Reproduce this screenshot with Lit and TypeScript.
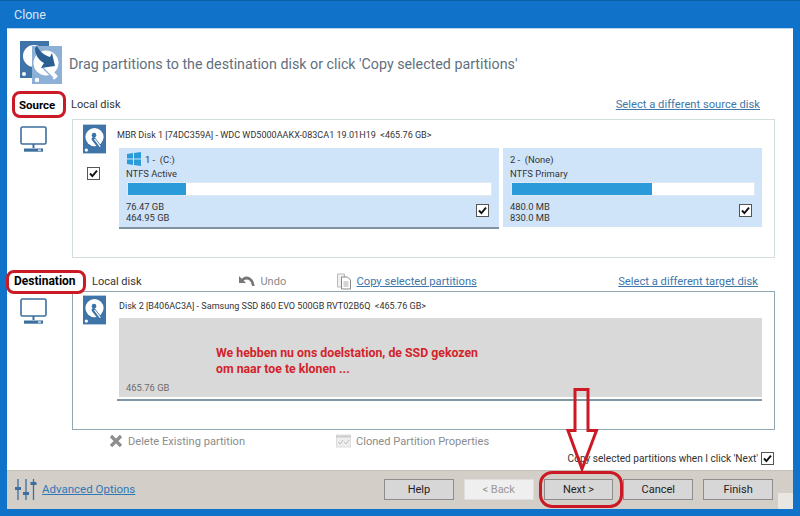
import { LitElement, html, css } from "lit";
import { customElement } from "lit/decorators.js";

const diskIcon = html`<svg class="disk" viewBox="0 0 24 30"><rect width="24" height="30" fill="#3f74a8"/><circle cx="12" cy="13" r="9.500" fill="#fff"/><circle cx="11.500" cy="11" r="2.400" fill="#3f74a8"/><path d="M11 15l7 9" stroke="#3f74a8" stroke-width="4.200" stroke-linecap="round"/><path d="M12 15l6 8" stroke="#fff" stroke-width="1.300"/><circle cx="3.500" cy="26.500" r="1.700" fill="#fff"/></svg>`;
const monitor = html`<svg class="mon" viewBox="0 0 27 27" fill="none" stroke="#3d6f9e"><rect x="1" y="1" width="25" height="17" rx="1.500" stroke-width="1.600"/><path d="M13.500 18v4" stroke-width="2"/><rect x="4" y="22.500" width="19" height="3.200" fill="#3d6f9e" stroke="none"/><rect x="18" y="23.500" width="3" height="1.200" fill="#fff" stroke="none"/></svg>`;
const check = html`<svg class="chk" viewBox="0 0 13 13"><rect x=".5" y=".5" width="12" height="12" fill="#fff" stroke="#555"/><path d="M3 6.500l2.400 2.600L10 3.600" fill="none" stroke="#111" stroke-width="1.900"/></svg>`;

@customElement("app-root")
export class AppRoot extends LitElement {
  static styles = css`
    :host { display: block; width: 800px; height: 516px; position: relative; overflow: hidden;
      font-family: Roboto, "Noto Sans", sans-serif; color: #333; background: #1172c9; }
    .frame { display: flex; flex-direction: column; height: 516px; padding: 0 7px; box-sizing: border-box; border-top: 1px solid #0d5fa8; }
    .title { height: 27px; flex: none; display: flex; align-items: center; padding-left: 7px; color: #d8e8f6; font-size: 12.500px; }
    .main { flex: 1; background: #fff; display: flex; flex-direction: column; min-height: 0; box-sizing: border-box; border-top: 1px solid #bcd6ee; }
    .hdr { height: 61px; flex: none; display: flex; align-items: center; padding-left: 13px; gap: 6px; color: #62707e; font-size: 14.250px; box-sizing: border-box; padding-top: 8px; }
    .logo { width: 43px; height: 43px; flex: none; margin-top: -2px; }
    .sec-head { display: flex; align-items: center; font-size: 11px; color: #333; flex: none; }
    .src-head { height: 29px; }
    .lab { font-weight: 700; color: #000; font-size: 11.500px; }
    .src-lab { margin-left: 12px; width: 52px; }
    .dst-lab { margin-left: 7px; width: 78px; font-size: 12px; }
    .link { color: #3f76a8; text-decoration: underline; font-size: 11.200px; }
    .right { margin-left: auto; }
    .body { display: flex; flex: none; }
    .rail { width: 65px; flex: none; padding-left: 13px; box-sizing: border-box; }
    .mon { width: 27px; height: 27px; display: block; margin-top: 7px; }
    .panel { width: 703px; box-sizing: border-box; border: 1px solid #d3dde0; flex: none; position: relative; }
    .src-panel { height: 139px; padding: 4px 12px 0 10px; }
    .dst-panel { height: 139px; border-color: #90a8b4; padding: 3px 12px 0 10px; }
    .disk-row { display: flex; height: 24px; gap: 11px; font-size: 9.050px; color: #333; }
    .disk { width: 23px; height: 30px; flex: none; display: block; }
    .dtext { line-height: 22px; white-space: pre; }
    .parts-row { display: flex; }
    .selbox { width: 36px; flex: none; padding: 19px 0 0 4px; box-sizing: border-box; }
    .chk { width: 13px; height: 13px; display: block; flex: none; }
    .parts { display: flex; gap: 4px; }
    .part { background: #cfe4f9; box-sizing: border-box; font-size: 9.400px; color: #333; padding: 4px 7px 0 7px; }
    .p1 { width: 380px; height: 81px; border-bottom: 2px solid #7f929f; }
    .p2 { width: 259px; height: 79px; }
    .ptitle { display: flex; align-items: center; gap: 4px; height: 14px; padding-left: 1px; white-space: pre; }
    .p2 .ptitle { padding-left: 0; }
    .win { width: 14px; height: 14px; flex: none; }
    .ptype { height: 15px; line-height: 16px; }
    .bar { height: 14px; background: #fff; margin: 1px 0 0 1px; border: 1px solid #dfe9f2; box-sizing: border-box; }
    .fill { height: 100%; background: #2a9ad8; }
    .pfoot { display: flex; justify-content: space-between; align-items: flex-start; padding-top: 5px; }
    .vals { line-height: 11px; }
    .pfoot .chk { margin: 3px 3px 0 0; }
    .free { margin-left: 36px; width: 643px; height: 79px; background: #d9d9d9; font-size: 9.400px; color: #6a6a6a; display: flex; align-items: flex-end; padding: 0 0 4px 7px; box-sizing: border-box; margin-top: -1px; }
    .free-line { margin: 2px 0 0 34px; width: 645px; border-top: 2px solid #7f96a4; }
    .undo { display: flex; align-items: center; gap: 4px; color: #8a8a8a; margin-left: 97px; width: 98px; font-size: 11px; }
    .copy { display: flex; align-items: center; gap: 3px; }
    .dst-head { height: 23px; margin-top: 10px; box-sizing: border-box; padding-top: 3px; }
    .actions { display: flex; align-items: center; height: 20px; margin-top: 1px; color: #8c8c8c; font-size: 11.100px; padding-left: 102px; flex: none; }
    .act { display: flex; align-items: center; gap: 5px; }
    .a1 { width: 227px; }
    .copyline { flex: none; height: 17px; display: flex; justify-content: flex-end; align-items: center; gap: 3px; font-size: 10.100px; padding-right: 19px; color: #333; margin-top: -1px; }
    .footer { flex: none; height: 39px; margin-top: auto; background: #d3cfc8; display: flex; align-items: center; padding: 0 20px 2px 7px; border-top: 1px solid #c4c0b8; box-sizing: border-box; position: relative; }
    .adv { display: flex; align-items: center; gap: 5px; }
    .adv .link { color: #2f78b8; font-size: 11.500px; }
    .btns { margin-left: auto; display: flex; gap: 10px; }
    .btn { width: 69.800px; height: 21px; box-sizing: border-box; background: #d7d7d7; border: 1px solid #8d8d8d; display: flex; align-items: center; justify-content: center; font-size: 11px; color: #222; }
    .btn.off { background: #efefef; border-color: #dedede; color: #999; }
    .grip { position: absolute; right: 0; bottom: 0; width: 15px; height: 16px; background: #e9e7e3; }
    .bottom { height: 7px; flex: none; }
    .note { position: absolute; left: 216px; top: 345px; color: #d3232b; font-weight: 700; font-size: 12.300px; line-height: 16px; white-space: nowrap; }
    .ring { position: absolute; border: 3px solid #cb1a26; border-radius: 8px; box-sizing: border-box; }
    .r1 { left: 12px; top: 91px; width: 54px; height: 27px; }
    .r2 { left: 6px; top: 270px; width: 80px; height: 24px; }
    .r3 { left: 539px; top: 471px; width: 84px; height: 37px; border-radius: 13px; }
    .arrow { position: absolute; left: 565px; top: 387px; width: 34px; height: 86px; }
  `;

  private bar(pct: number) {
    return html`<div class="bar"><div class="fill" style="width:${pct}%"></div></div>`;
  }

  render() {
    return html`
      <div class="frame">
        <div class="title">Clone</div>
        <div class="main">
          <div class="hdr">
            <svg class="logo" viewBox="0 0 43 43">
              <path d="M0 0h29v37H0z" fill="#3f74a8"/>
              <circle cx="14" cy="15" r="11" fill="#fff"/>
              <circle cx="4" cy="33" r="2" fill="#fff"/>
              <path d="M12 5h30v38H12z" fill="#8db0d6"/>
              <circle cx="26" cy="22" r="12.500" fill="#fff"/>
              <circle cx="17" cy="39" r="2.200" fill="#fff"/>
              <path d="M27 27l9 10" stroke="#fff" stroke-width="5"/>
              <path d="M22 26l11 11" stroke="#8db0d6" stroke-width="1.200"/>
              <path d="M17 5c3 6 7 9 13 11l2-4 3 13-14 2 3-5c-6-3-9-9-9-15z" fill="#2c5f92"/>
            </svg>
            <span>Drag partitions to the destination disk or click 'Copy selected partitions'</span>
          </div>

          <div class="sec-head src-head" style="padding-right:33px">
            <span class="lab src-lab">Source</span>
            <span>Local disk</span>
            <span class="link right">Select a different source disk</span>
          </div>
          <div class="body">
            <div class="rail">${monitor}</div>
            <div class="panel src-panel">
              <div class="disk-row">${diskIcon}<span class="dtext">MBR Disk 1 [74DC359A] - WDC WD5000AAKX-083CA1 19.01H19  &lt;465.76 GB&gt;</span></div>
              <div class="parts-row">
                <div class="selbox">${check}</div>
                <div class="parts">
                  <div class="part p1">
                    <div class="ptitle">
                      <svg class="win" viewBox="0 0 14 14" fill="#2a9ad8"><path d="M0 2l6-1v5.600H0zM7 .9L14 0v6.600H7zM0 7.400h6V13l-6-1zM7 7.400h7V14l-7-1z"/></svg>
                      <span>1 -  (C:)</span>
                    </div>
                    <div class="ptype">NTFS Active</div>
                    ${this.bar(16)}
                    <div class="pfoot"><div class="vals">76.47 GB<br>464.95 GB</div>${check}</div>
                  </div>
                  <div class="part p2">
                    <div class="ptitle"><span>2 -  (None)</span></div>
                    <div class="ptype">NTFS Primary</div>
                    ${this.bar(57.7)}
                    <div class="pfoot"><div class="vals">480.0 MB<br>830.0 MB</div>${check}</div>
                  </div>
                </div>
              </div>
            </div>
          </div>

          <div class="sec-head dst-head" style="padding-right:35px">
            <span class="lab dst-lab">Destination</span>
            <span>Local disk</span>
            <span class="undo">
              <svg width="18" height="13" viewBox="0 0 18 13"><path d="M1 1v7h7L5.600 5.600C8 3.600 11.500 4 13 7.500l1 3.500h2.500C16.500 5 12 1 8 1.500 6.500 1.700 5 2.500 3.800 3.700z" fill="#777"/></svg>
              Undo
            </span>
            <span class="copy">
              <svg width="17" height="17" viewBox="0 0 17 17" fill="none"><path d="M1.500 1h7v13h-7z" fill="#f1f1f1" stroke="#b9b9b9"/><path d="M5.500 4h6l3 3v9h-9z" fill="#fff" stroke="#888"/><path d="M7.500 9h5M7.500 11h5M7.500 13h5" stroke="#aaa"/></svg>
              <span class="link">Copy selected partitions</span>
            </span>
            <span class="link right">Select a different target disk</span>
          </div>
          <div class="body">
            <div class="rail">${monitor}</div>
            <div class="panel dst-panel">
              <div class="disk-row">${diskIcon}<span class="dtext" style="margin-left:2px;line-height:23px">Disk 2 [B406AC3A] - Samsung SSD 860 EVO 500GB RVT02B6Q  &lt;465.76 GB&gt;</span></div>
              <div class="free">465.76 GB</div>
              <div class="free-line"></div>
            </div>
          </div>

          <div class="actions">
            <span class="act a1">
              <svg width="14" height="14" viewBox="0 0 14 14"><path d="M2 2l10 10M12 2L2 12" stroke="#8d8d8d" stroke-width="3.200"/></svg>
              Delete Existing partition
            </span>
            <span class="act">
              <svg width="15" height="14" viewBox="0 0 15 14" fill="none"><rect x=".5" y="1" width="14" height="12" fill="#eee" stroke="#ddd"/><path d="M0 2.500h15" stroke="#ccc" stroke-width="2"/><path d="M2 8l2 2 3-4M8 8l2 2 3-4" stroke="#bbb"/></svg>
              Cloned Partition Properties
            </span>
          </div>
          <div class="copyline"><span>Copy selected partitions when I click 'Next'</span>${check}</div>

          <div class="footer">
            <div class="adv">
              <svg width="23" height="23" viewBox="0 0 23 23" stroke="#3d6f9e" fill="#3d6f9e"><path d="M4 1v21M12 1v21M19.500 1v21" stroke-width="1.300"/><rect x="1" y="9" width="6" height="3" stroke="none"/><rect x="9" y="14" width="6" height="3" stroke="none"/><rect x="16.500" y="4" width="6" height="3" stroke="none"/></svg>
              <span class="link">Advanced Options</span>
            </div>
            <div class="btns">
              <div class="btn">Help</div>
              <div class="btn off">&lt; Back</div>
              <div class="btn">Next &gt;</div>
              <div class="btn">Cancel</div>
              <div class="btn">Finish</div>
            </div>
            <div class="grip"></div>
          </div>
        </div>
        <div class="bottom"></div>
      </div>

      <div class="note">We hebben nu ons doelstation, de SSD gekozen<br>om naar toe te klonen ...</div>
      <div class="ring r1"></div>
      <div class="ring r2"></div>
      <div class="ring r3"></div>
      <svg class="arrow" viewBox="0 0 34 86"><path d="M10 2.500h13v41h8.500L17 82 3 43.500h7z" fill="none" stroke="#cb1a26" stroke-width="3"/></svg>
    `;
  }
}
